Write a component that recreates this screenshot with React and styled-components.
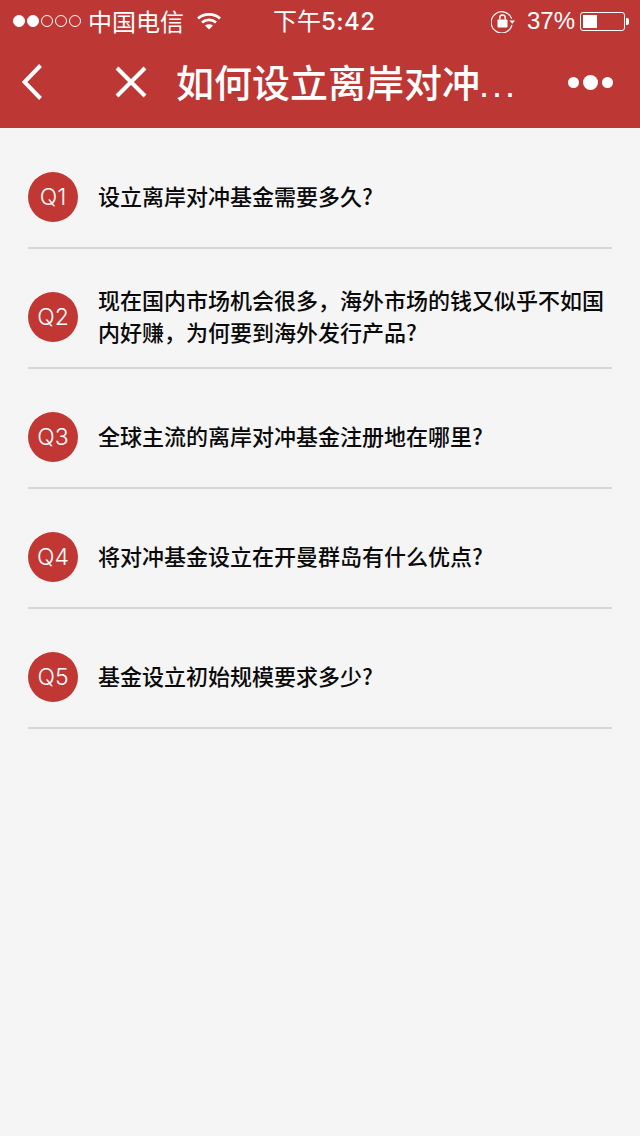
import React from 'react';
import styled, { createGlobalStyle } from 'styled-components';

const GlobalStyle = createGlobalStyle`
  html, body {
    margin: 0;
    padding: 0;
    background: #f5f5f5;
  }
  * {
    box-sizing: border-box;
  }
`;

const Page = styled.div`
  width: 640px;
  min-height: 1136px;
  background: #f5f5f5;
  font-family: "Liberation Sans", "Noto Sans CJK SC", sans-serif;
`;

const Header = styled.header`
  height: 128px;
  background: #bd3835;
  color: #fff;
`;

const StatusBar = styled.div`
  height: 40px;
  padding: 0 11px 0 13px;
  display: grid;
  grid-template-columns: 260px 1fr auto;
  align-items: center;
  font-size: 24px;
`;

const Carrier = styled.div`
  display: flex;
  align-items: center;
`;

const Signal = styled.div`
  display: flex;
  gap: 2px;
  margin-right: 7px;
`;

const SignalDot = styled.span`
  width: 12px;
  height: 12px;
  border-radius: 50%;
  border: 1.5px solid #fff;
  background: ${props => props.on ? '#fff' : 'transparent'};
`;

const CarrierName = styled.span`
  font-family: "Noto Sans CJK SC", sans-serif;
  font-weight: 400;
  margin-right: 13px;
  line-height: 40px;
`;

const Time = styled.div`
  font-family: "Noto Sans CJK SC", sans-serif;
  font-weight: 400;
  line-height: 40px;
`;

const TimeDigits = styled.span`
  font-family: "Inter", "Liberation Sans", sans-serif;
  font-weight: 500;
  letter-spacing: 0.5px;
`;

const Right = styled.div`
  display: flex;
  align-items: center;
`;

const Percent = styled.span`
  margin: 0 5px 0 12px;
  line-height: 40px;
`;

const Battery = styled.div`
  position: relative;
  width: 45px;
  height: 19px;
  border: 1px solid #fff;
  border-radius: 3px;
  padding: 2px;
  margin-right: 4px;
  &::after {
    content: '';
    position: absolute;
    right: -5px;
    top: 5px;
    width: 3px;
    height: 7px;
    background: #fff;
    border-radius: 0 2px 2px 0;
  }
`;

const BatteryFill = styled.div`
  width: 37%;
  height: 100%;
  background: #fff;
`;

const NavBar = styled.div`
  height: 88px;
  display: flex;
  align-items: center;
  padding: 0 27px 4px 22px;
`;

const NavIcon = styled.svg`
  display: block;
  flex: none;
  margin-left: ${props => props.$left || 0}px;
`;

const Title = styled.div`
  margin: 2px 0 0 29px;
  font-size: 38px;
  line-height: 44px;
  font-weight: 500;
  font-family: "Noto Sans CJK SC", sans-serif;
  white-space: nowrap;
`;

const TitleDots = styled.span`
  font-family: "Liberation Sans", sans-serif;
  font-size: 36px;
  letter-spacing: 3px;
  margin-left: -1px;
`;

const More = styled.div`
  margin-left: auto;
  display: flex;
  align-items: center;
  gap: 4px;
`;

const MoreDot = styled.span`
  width: ${props => props.big ? 15 : 11}px;
  height: ${props => props.big ? 15 : 11}px;
  border-radius: 50%;
  background: #fff;
`;

const List = styled.ul`
  list-style: none;
  margin: 0;
  padding: 1px 28px 0;
`;

const Row = styled.li`
  display: flex;
  align-items: center;
  gap: 20px;
  padding: 36px 0 18px;
  border-bottom: 2px solid #d6d6d6;
  min-height: 120px;
`;

const Badge = styled.div`
  flex: none;
  width: 50px;
  height: 50px;
  border-radius: 50%;
  background: #c13734;
  color: #fff;
  display: flex;
  align-items: center;
  justify-content: center;
  font-family: "Inter", "Liberation Sans", sans-serif;
  font-weight: 300;
  font-size: 23px;
`;

const Question = styled.div`
  margin: -2px 0 2px;
  font-family: "Noto Sans CJK SC", sans-serif;
  font-weight: 500;
  font-size: 22px;
  line-height: 32px;
  color: #0a0a0a;
`;

const questions = [
  '设立离岸对冲基金需要多久?',
  '现在国内市场机会很多，海外市场的钱又似乎不如国内好赚，为何要到海外发行产品?',
  '全球主流的离岸对冲基金注册地在哪里?',
  '将对冲基金设立在开曼群岛有什么优点?',
  '基金设立初始规模要求多少?',
];

const WifiIcon = () => (
  <svg width="24" height="18" viewBox="0 0 24 18" fill="none" stroke="#fff" strokeWidth="2.8">
    <path d="M1 6.5C7 1 17 1 23 6.5" />
    <path d="M5 10.5C9 7 15 7 19 10.5" />
    <path d="M12 17.5L8 13.4C10.4 11.8 13.6 11.8 16 13.4Z" fill="#fff" stroke="none" />
  </svg>
);

const RotationIcon = () => (
  <svg width="24" height="24" viewBox="0 0 24 24" fill="none">
    <path d="M20.6 9.5A10.6 10.6 0 1 0 21 16" stroke="#fff" strokeWidth="1.2" />
    <path d="M18.5 11.5h5.5l-2.7 3.2z" fill="#fff" />
    <rect x="6.5" y="10.5" width="10" height="8" rx="0.8" fill="#fff" />
    <path d="M8.8 10.5V8.6a2.7 2.7 0 0 1 5.4 0v1.9" stroke="#fff" strokeWidth="1.5" />
  </svg>
);

const App = () => (
  <Page>
    <GlobalStyle />
    <Header>
      <StatusBar>
        <Carrier>
          <Signal>
            {[true, true, false, false, false].map((on, i) => <SignalDot key={i} on={on || undefined} />)}
          </Signal>
          <CarrierName>中国电信</CarrierName>
          <WifiIcon />
        </Carrier>
        <Time>下午<TimeDigits>5:42</TimeDigits></Time>
        <Right>
          <RotationIcon />
          <Percent>37%</Percent>
          <Battery><BatteryFill /></Battery>
        </Right>
      </StatusBar>
      <NavBar>
        <NavIcon width="20" height="36" viewBox="0 0 20 36" fill="none" stroke="#fff" strokeWidth="4">
          <path d="M18.5 1.5L2.5 18L18.5 34.5" />
        </NavIcon>
        <NavIcon $left="73" width="32" height="32" viewBox="0 0 32 32" fill="none" stroke="#fff" strokeWidth="4">
          <path d="M2 2L30 30M30 2L2 30" />
        </NavIcon>
        <Title>如何设立离岸对冲<TitleDots>...</TitleDots></Title>
        <More>
          <MoreDot />
          <MoreDot big />
          <MoreDot />
        </More>
      </NavBar>
    </Header>
    <List>
      {questions.map((q, i) => (
        <Row key={i}>
          <Badge>Q{i + 1}</Badge>
          <Question>{q}</Question>
        </Row>
      ))}
    </List>
  </Page>
);

export default App;
